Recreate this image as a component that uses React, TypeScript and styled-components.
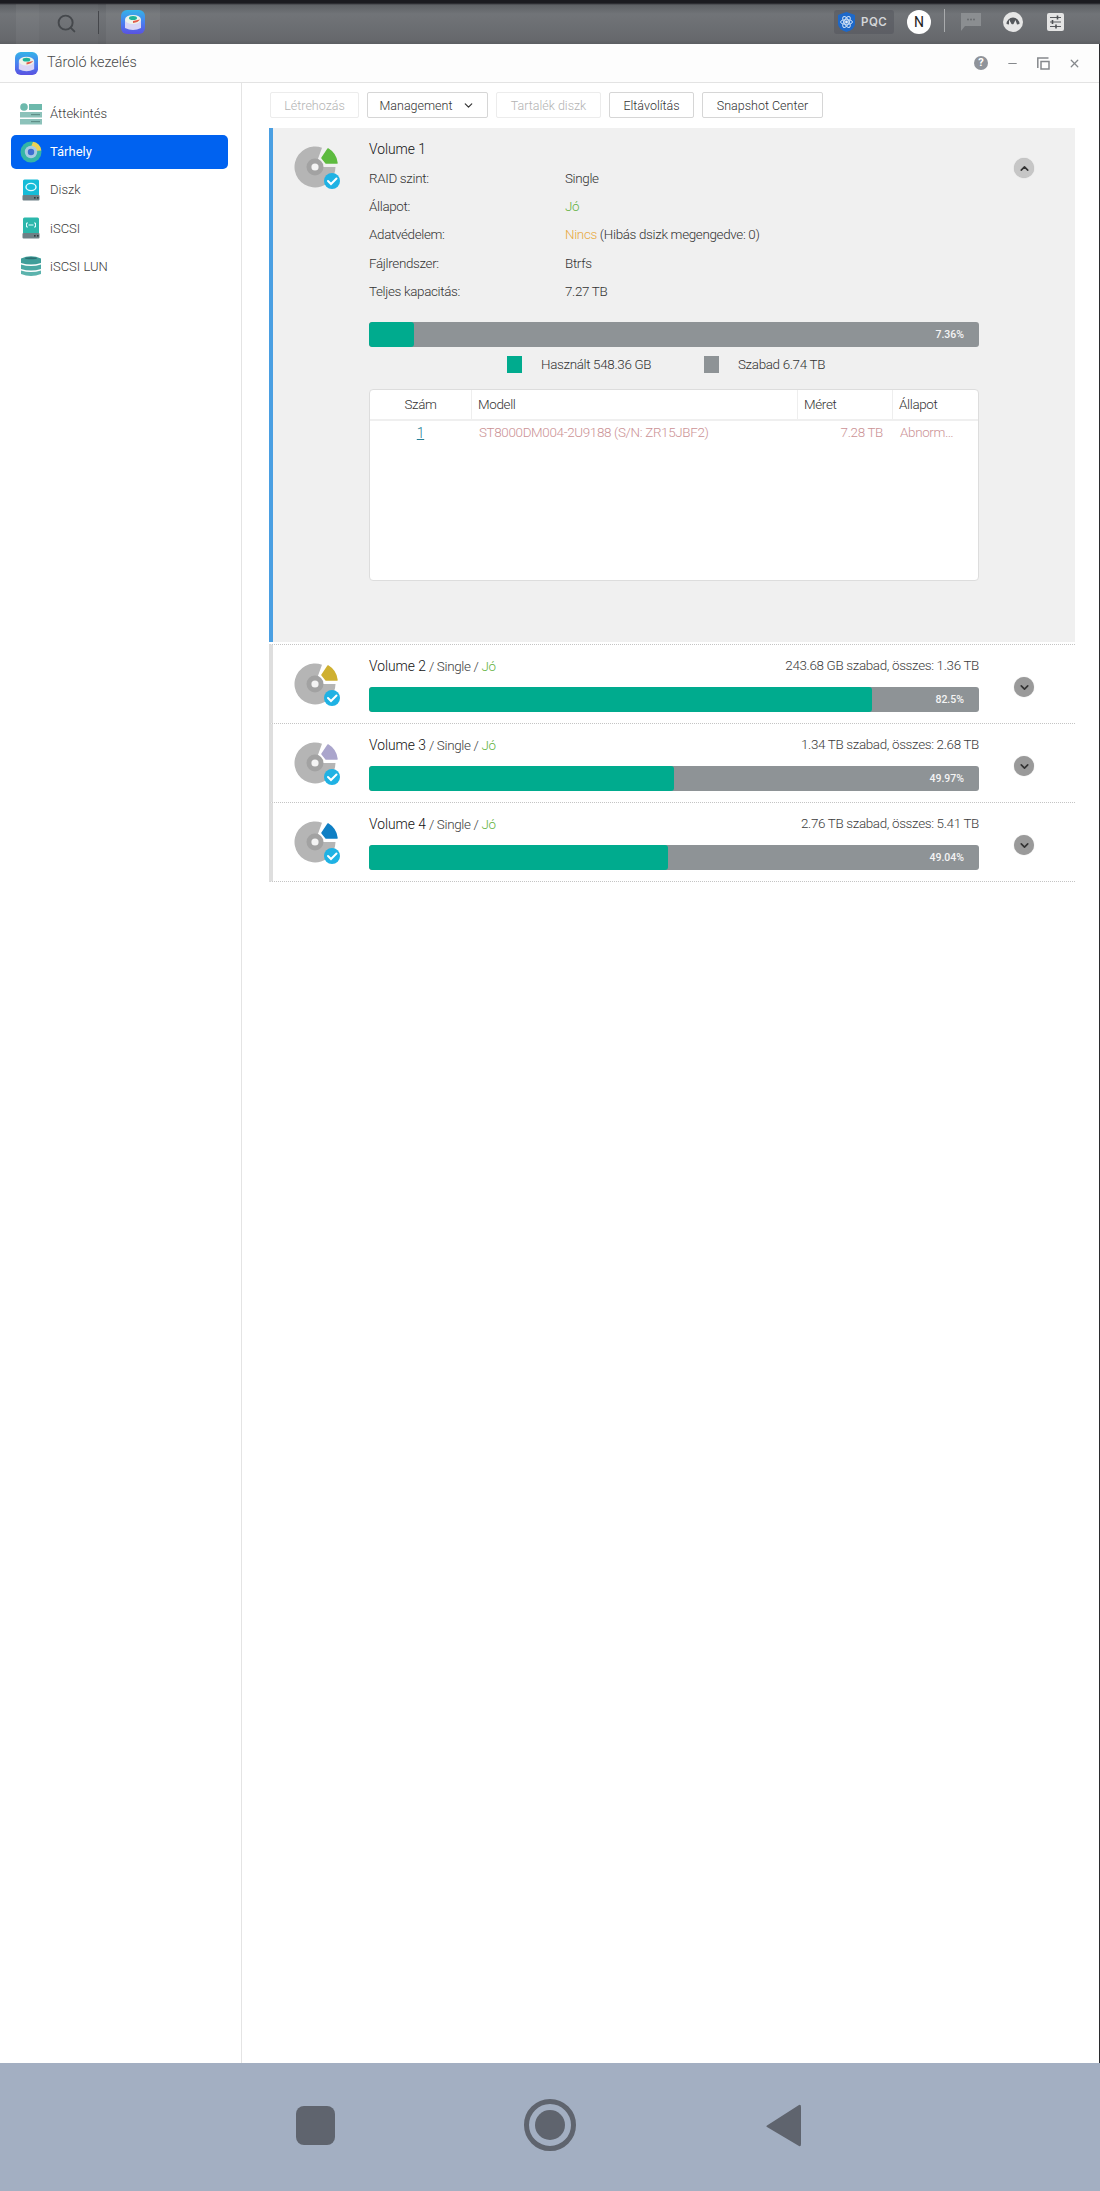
import React from 'react';
import styled, {createGlobalStyle} from 'styled-components';
import {ChevronDown, ChevronUp, Minus, Search, X} from 'lucide-react';

const GlobalStyle = createGlobalStyle`
  html, body {
    margin: 0;
    padding: 0;
    background: #ffffff;
  }
  body {
    font-family: Roboto, "Liberation Sans", sans-serif;
    font-size: 13px;
    font-weight: 300;
    color: #333;
  }
`;

const Page = styled.div`
  width: 1100px;
  height: 2191px;
  display: flex;
  flex-direction: column;
  overflow: hidden;
  background: #2a2b2e;
`;

const TopBar = styled.header`
  height: 44px;
  flex: none;
  box-sizing: border-box;
  display: flex;
  align-items: stretch;
  padding: 4px 0 0 16px;
  background: linear-gradient(#1b1b20 0, #1b1b20 3px, #5d6064 5px, #717478 14px, #66686c 40px, #5c5e62 44px);
`;

const GhostTile = styled.div`
  width: 23px;
  background: rgba(255, 255, 255, 0.05);
`;

const SearchCell = styled.div`
  width: 59px;
  display: flex;
  align-items: center;
  justify-content: center;
  padding: 0 5px 2px 0;
  box-sizing: border-box;
  background: rgba(255, 255, 255, 0.025);
  color: #45484c;
`;

const BarDivider = styled.div<{$light?: boolean}>`
  width: 1px;
  height: 23px;
  flex: none;
  align-self: center;
  margin-top: -4px;
  background: ${p => (p.$light ? '#a9abad' : '#45474b')};
`;

const AppTile = styled.div`
  width: 54px;
  margin-left: 7px;
  display: flex;
  align-items: center;
  justify-content: center;
  box-sizing: border-box;
  padding: 0 0 4px 0;
  background: rgba(255, 255, 255, 0.05);
`;

const TraySpacer = styled.div`
  flex: 1;
`;

const Tray = styled.div`
  display: flex;
  align-items: center;
  height: 40px;
  padding: 0 36px 4px 0;
  box-sizing: border-box;
`;

const PqcTile = styled.div`
  width: 60px;
  height: 24px;
  box-sizing: border-box;
  padding-left: 4px;
  margin-right: 13px;
  display: flex;
  align-items: center;
  gap: 6px;
  border-radius: 3px;
  background: rgba(84, 86, 92, 0.55);
  color: #d4d6d9;
  font-family: Inter, Roboto, sans-serif;
  font-size: 11.5px;
  font-weight: 600;
  letter-spacing: 0.5px;
`;

const Avatar = styled.div`
  width: 24px;
  height: 24px;
  margin-right: 13px;
  border-radius: 50%;
  background: #ffffff;
  color: #222;
  display: flex;
  align-items: center;
  justify-content: center;
  font-size: 14px;
  font-weight: 400;
`;

const TrayIcon = styled.span<{$gap: number}>`
  display: flex;
  margin-left: ${p => p.$gap}px;
`;

const Window = styled.main`
  flex: 1;
  min-height: 0;
  display: flex;
  flex-direction: column;
  margin-right: 1px;
  background: #ffffff;
  border-radius: 6px 3px 0 0;
`;

const TitleBar = styled.div`
  height: 39px;
  flex: none;
  box-sizing: border-box;
  display: flex;
  align-items: center;
  padding: 0 18px 0 15px;
  border-bottom: 1px solid #e3e3e3;
  background: #fdfdfd;
`;

const TitleText = styled.div`
  margin: 0 0 2px 9px;
  flex: 1;
  font-size: 14.4px;
  color: #4a4a4a;
`;

const WindowControls = styled.div`
  display: flex;
  align-items: center;
  gap: 18px;
  color: #85888c;
`;

const HelpDot = styled.div`
  width: 14px;
  height: 14px;
  border-radius: 50%;
  background: #8f939a;
  color: #fff;
  font-size: 11px;
  font-weight: 700;
  line-height: 14px;
  text-align: center;
`;

const Body = styled.div`
  flex: 1;
  min-height: 0;
  display: flex;
`;

const Sidebar = styled.nav`
  width: 242px;
  flex: none;
  box-sizing: border-box;
  padding: 14px 13px 0 11px;
  border-right: 1px solid #e4e4e4;
`;

const NavItem = styled.div<{$active?: boolean}>`
  height: 34px;
  margin-bottom: 4.2px;
  padding: 0 0 1px 9px;
  box-sizing: border-box;
  display: flex;
  align-items: center;
  gap: 8px;
  border-radius: 5px;
  background: ${p => (p.$active ? '#0062f0' : 'transparent')};
  color: ${p => (p.$active ? '#ffffff' : '#3c3c3c')};
  font-size: 13px;
  font-weight: ${p => (p.$active ? 400 : 300)};
`;

const NavIconBox = styled.span`
  width: 22px;
  height: 22px;
  display: flex;
  flex: none;
`;

const Content = styled.section`
  flex: 1;
  min-width: 0;
  padding: 9px 24px 0 27px;
`;

const Toolbar = styled.div`
  display: flex;
  gap: 8px;
  margin-bottom: 10px;
  padding-left: 1px;
`;

const ToolButton = styled.button<{$width: number; $disabled?: boolean}>`
  width: ${p => p.$width}px;
  height: 26px;
  padding: 0;
  display: flex;
  align-items: center;
  justify-content: center;
  gap: 10px;
  background: #ffffff;
  border: 1px solid ${p => (p.$disabled ? '#ececec' : '#d6d6d6')};
  border-radius: 2px;
  color: ${p => (p.$disabled ? '#b3b3b3' : '#333')};
  font-family: inherit;
  font-size: 12.5px;
  font-weight: 300;
`;

const VolumePanel = styled.article`
  height: 514px;
  box-sizing: border-box;
  display: flex;
  padding: 12px 0 0 20px;
  margin-bottom: 2px;
  background: #f0f0f0;
  border-left: 4px solid #4a9fe2;
  font-size: 13.4px;
  letter-spacing: -0.33px;
`;

const VolumeRow = styled.article`
  height: 79px;
  box-sizing: border-box;
  display: flex;
  padding: 12px 0 0 20px;
  border-left: 4px solid #dedede;
  border-bottom: 1px dotted #c4c4c4;
  ${VolumePanel} + & {
    height: 80px;
    border-top: 1px dotted #c4c4c4;
  }
`;

const DiskCol = styled.div`
  width: 76px;
  padding-top: 2px;
  flex: none;
`;

const VolumeBody = styled.div`
  width: 610px;
  flex: none;
`;

const ChevronCol = styled.div<{$top: number}>`
  margin: ${p => p.$top}px 0 0 35px;
`;

const Chevron = styled.div<{$open?: boolean}>`
  width: 20px;
  height: 20px;
  border-radius: 50%;
  display: flex;
  align-items: center;
  justify-content: center;
  background: ${p => (p.$open ? '#c6c6c6' : '#9a9a9a')};
  box-shadow: 0 0 1px rgba(0, 0, 0, 0.3);
  color: #333;
`;

const VolumeTitle = styled.div`
  height: 18px;
  line-height: 18px;
  margin-bottom: 6px;
  font-size: 13.8px;
  letter-spacing: 0;
  color: #111;
`;

const RowHead = styled.div`
  height: 18px;
  line-height: 18px;
  margin-bottom: 12px;
  display: flex;
  justify-content: space-between;
  font-size: 13.4px;
  letter-spacing: -0.33px;
  color: #3c3c3c;
`;

const RowName = styled.span`
  font-size: 13.8px;
  letter-spacing: 0;
  color: #111;
`;

const Good = styled.span`
  color: #5fb13c;
`;

const Warn = styled.span`
  color: #e8a93f;
`;

const InfoGrid = styled.dl`
  margin: 0 0 16px;
  display: grid;
  grid-template-columns: 196px 1fr;
  grid-auto-rows: 28.4px;
  align-items: center;
`;

const InfoKey = styled.dt`
  color: #333;
`;

const InfoValue = styled.dd`
  margin: 0;
  color: #333;
`;

const BarTrack = styled.div`
  position: relative;
  height: 25px;
  border-radius: 3px;
  overflow: hidden;
  display: flex;
  justify-content: flex-end;
  align-items: center;
  padding-right: 15px;
  background: #8e9396;
  color: #f4f4f4;
  font-size: 10.5px;
  font-weight: 500;
  letter-spacing: 0;
`;

const BarFill = styled.div`
  position: absolute;
  left: 0;
  top: 0;
  bottom: 0;
  background: #00ab8e;
  border-radius: 3px;
`;

const BarLabel = styled.span`
  position: relative;
`;

const Legend = styled.div`
  height: 17px;
  margin: 9px 0 16px 138px;
  display: flex;
  align-items: center;
`;

const LegendSwatch = styled.span<{$color: string}>`
  width: 15px;
  height: 17px;
  background: ${p => p.$color};
`;

const LegendLabel = styled.span<{$width: number}>`
  width: ${p => p.$width}px;
  margin-left: 19px;
`;

const DiskTable = styled.div`
  height: 192px;
  box-sizing: border-box;
  background: #ffffff;
  border: 1px solid #dddddd;
  border-radius: 4px;
`;

const TableRow = styled.div<{$head?: boolean}>`
  display: grid;
  grid-template-columns: 101px 326px 95px 1fr;
  height: ${p => (p.$head ? 29 : 24)}px;
  align-items: center;
  border-bottom: ${p => (p.$head ? '2px solid #efefef' : 'none')};
`;

const HeadCell = styled.div<{$center?: boolean}>`
  height: 100%;
  line-height: 29px;
  padding-left: ${p => (p.$center ? 0 : 6)}px;
  box-sizing: border-box;
  text-align: ${p => (p.$center ? 'center' : 'left')};
  border-left: 1px solid #eeeeee;
  color: #333;
  &:first-child {
    border-left: 0;
  }
`;

const DiskLink = styled.a`
  text-align: center;
  color: #2a7f96;
  font-size: 14px;
  text-decoration: underline;
`;

const BadCell = styled.div<{$right?: boolean}>`
  padding: ${p => (p.$right ? '0 9px 0 0' : '0 20px 0 8px')};
  text-align: ${p => (p.$right ? 'right' : 'left')};
  color: #cb9295;
  white-space: nowrap;
  overflow: hidden;
  text-overflow: ellipsis;
`;

const NavBar = styled.footer`
  height: 128px;
  flex: none;
  display: flex;
  align-items: center;
  padding-left: 296px;
  box-sizing: border-box;
  background: #a3afc2;
`;

const StopButton = styled.div`
  width: 39px;
  height: 39px;
  margin: -4px 0 0 0;
  border-radius: 8px;
  background: #5f646e;
`;

const HomeButton = styled.div`
  width: 52px;
  height: 52px;
  margin: -4px 0 0 189px;
  box-sizing: border-box;
  border: 5px solid #5f646e;
  border-radius: 50%;
  display: flex;
  align-items: center;
  justify-content: center;
  &::after {
    content: '';
    width: 30px;
    height: 30px;
    border-radius: 50%;
    background: #5f646e;
  }
`;

const BackButton = styled.svg`
  margin: -3px 0 0 189px;
`;

function AppIcon({size}: {size: number}) {
  return (
    <svg width={size} height={size} viewBox="0 0 24 24">
      <defs>
        <linearGradient id="appbg" x1="0" y1="0" x2="0" y2="1">
          <stop offset="0" stopColor="#35b3e8" />
          <stop offset="0.55" stopColor="#4a7cf0" />
          <stop offset="1" stopColor="#5a52e0" />
        </linearGradient>
      </defs>
      <rect width="24" height="24" rx="6" fill="url(#appbg)" />
      <path d="M4 10 V18 Q12 22 20 18 V10 Z" fill="#d9d6f6" />
      <ellipse cx="12" cy="9.5" rx="8" ry="4.5" fill="#eef3ea" />
      <ellipse cx="12" cy="8" rx="4" ry="2" fill="#1fb39a" />
      <path d="M12 11 L19 9.5 Q17 12.5 12 13 Z" fill="#e25a4a" />
    </svg>
  );
}

function OverviewIcon() {
  return (
    <svg width="22" height="22" viewBox="0 0 22 22">
      <circle cx="4" cy="4" r="3.8" fill="#6db9ac" />
      <rect x="9" y="1" width="13" height="6" fill="#6db9ac" />
      <rect y="9" width="22" height="5.5" fill="#8cc2ba" />
      <rect y="16" width="22" height="5.5" fill="#8cc2ba" />
      <rect x="11" y="11" width="9" height="1.2" fill="#5f8f88" />
      <rect x="11" y="18" width="9" height="1.2" fill="#5f8f88" />
    </svg>
  );
}

function StorageIcon() {
  return (
    <svg width="22" height="22" viewBox="0 0 22 22">
      <circle cx="11" cy="11" r="10.5" fill="#35b5a6" />
      <path d="M13 0.7 A10.5 10.5 0 0 1 21.4 9.5 L15 10 Q14 6.5 11 6 Z" fill="#ecd257" />
      <circle cx="11" cy="11" r="6.2" fill="#a7cbe2" />
      <circle cx="11" cy="11" r="3.2" fill="#3d6fd0" />
    </svg>
  );
}

function DriveIcon({color, glyph}: {color: string; glyph: 'disk' | 'link'}) {
  return (
    <svg width="22" height="22" viewBox="0 0 22 22">
      <path d="M3 2 Q3 0.5 4.5 0.5 H17.5 Q19 0.5 19 2 V16 H3 Z" fill={color} />
      <rect x="2.5" y="16" width="17" height="5.5" rx="1" fill="#6d7f85" />
      <rect x="14" y="18" width="1.6" height="1.6" fill="#2e3a3e" />
      <rect x="17" y="18" width="1.6" height="1.6" fill="#2e3a3e" />
      {glyph === 'disk' ? (
        <ellipse cx="11" cy="8" rx="5" ry="3.6" fill="none" stroke="#e6fbff" strokeWidth="1.4" />
      ) : (
        <path d="M8 6 H6.5 V10 H8 M14 6 H15.5 V10 H14 M8.5 8 H13.5" fill="none" stroke="#e6fbff" strokeWidth="1" />
      )}
    </svg>
  );
}

function LunIcon() {
  return (
    <svg width="22" height="22" viewBox="0 0 22 22">
      <path d="M1 3.5 Q11 -1 21 3.5 V8 Q11 11 1 8 Z" fill="#3f9e9a" />
      <path d="M1 9.5 Q11 12.5 21 9.5 V14 Q11 17 1 14 Z" fill="#4aa9a4" />
      <path d="M1 15.5 Q11 18.5 21 15.5 V19 Q11 23 1 19 Z" fill="#5bb3ad" />
      <ellipse cx="11" cy="3.2" rx="6" ry="1" fill="#2c6f72" />
    </svg>
  );
}

function DiskIcon({wedge}: {wedge: string}) {
  return (
    <svg width="50" height="50" viewBox="0 0 50 50">
      <path d="M22 25 L29 5.7 A20.5 20.5 0 1 0 42.5 25 Z" fill="#b5b5b5" />
      <circle cx="22" cy="25" r="8.5" fill="#a2a2a2" />
      <circle cx="22" cy="25" r="3.6" fill="#f4f4f4" />
      <path
        d="M35 7 A19 19 0 0 1 44 21 H33 L29 16 Z"
        fill={wedge}
        stroke={wedge}
        strokeWidth="1.5"
        strokeLinejoin="round"
      />
      <circle cx="39" cy="39" r="8" fill="#1fb2e4" />
      <path d="M35 39 L38 42 L43.5 36.5" fill="none" stroke="#ffffff" strokeWidth="2" strokeLinecap="round" />
    </svg>
  );
}

function UsageBar({percent}: {percent: number}) {
  return (
    <BarTrack>
      <BarFill style={{width: `${percent}%`}} />
      <BarLabel>{percent}%</BarLabel>
    </BarTrack>
  );
}

const navItems = [
  {label: 'Áttekintés', icon: <OverviewIcon />},
  {label: 'Tárhely', icon: <StorageIcon />, active: true},
  {label: 'Diszk', icon: <DriveIcon color="#16bcd8" glyph="disk" />},
  {label: 'iSCSI', icon: <DriveIcon color="#2cb7ab" glyph="link" />},
  {label: 'iSCSI LUN', icon: <LunIcon />},
];

const volumes = [
  {name: 'Volume 2', free: '243.68 GB szabad, összes: 1.36 TB', percent: 82.5, wedge: '#cfb030'},
  {name: 'Volume 3', free: '1.34 TB szabad, összes: 2.68 TB', percent: 49.97, wedge: '#aaa5cc'},
  {name: 'Volume 4', free: '2.76 TB szabad, összes: 5.41 TB', percent: 49.04, wedge: '#0f7fc4'},
];

export default function App() {
  return (
    <Page>
      <GlobalStyle />
      <TopBar>
        <GhostTile />
        <SearchCell>
          <Search size={21} strokeWidth={2.2} />
        </SearchCell>
        <BarDivider />
        <AppTile>
          <AppIcon size={24} />
        </AppTile>
        <TraySpacer />
        <Tray>
          <PqcTile>
            <svg width="17" height="20" viewBox="0 0 17 20">
              <path d="M0 3 L8.5 0 L17 3 V12 Q17 17 8.5 20 Q0 17 0 12 Z" fill="#1d68c9" />
              <g fill="none" stroke="#c9def6" strokeWidth="1">
                <ellipse cx="8.5" cy="10" rx="6" ry="2.4" />
                <ellipse cx="8.5" cy="10" rx="6" ry="2.4" transform="rotate(60 8.5 10)" />
                <ellipse cx="8.5" cy="10" rx="6" ry="2.4" transform="rotate(120 8.5 10)" />
              </g>
              <circle cx="8.5" cy="10" r="1.4" fill="#e3eefb" />
            </svg>
            PQC
          </PqcTile>
          <Avatar>N</Avatar>
          <BarDivider $light />
          <TrayIcon $gap={16}>
            <svg width="20" height="18" viewBox="0 0 20 18">
              <path d="M0 0 H20 V13 H4 L0 18 Z" fill="#8b8e91" />
              <circle cx="7" cy="6.5" r="0.9" fill="#66696d" />
              <circle cx="10" cy="6.5" r="0.9" fill="#66696d" />
              <circle cx="13" cy="6.5" r="0.9" fill="#66696d" />
            </svg>
          </TrayIcon>
          <TrayIcon $gap={22}>
            <svg width="20" height="20" viewBox="0 0 20 20">
              <circle cx="10" cy="10" r="10" fill="#e6e6e6" />
              <path
                d="M3.5 12 A6.5 6.5 0 0 1 16.5 12 L14 12.5 L12.5 8 L10.5 12 A1.6 1.6 0 0 1 8 11 L6 7.5 L6 12.5 Z"
                fill="#55585c"
              />
            </svg>
          </TrayIcon>
          <TrayIcon $gap={24}>
            <svg width="17" height="18" viewBox="0 0 17 18">
              <rect width="17" height="18" rx="2" fill="#e4e4e4" />
              <path d="M3 4.5 H14 M3 9 H14 M3 13.5 H14" stroke="#5a5c60" strokeWidth="1" />
              <path d="M10.5 2.5 V6.5 M5.5 7 V11 M9 11.5 V15.5" stroke="#4e5054" strokeWidth="1.6" />
            </svg>
          </TrayIcon>
        </Tray>
      </TopBar>
      <Window>
        <TitleBar>
          <AppIcon size={23} />
          <TitleText>Tároló kezelés</TitleText>
          <WindowControls>
            <HelpDot>?</HelpDot>
            <Minus size={13} strokeWidth={2} />
            <svg width="13" height="13" viewBox="0 0 13 13" fill="none" stroke="currentColor" strokeWidth="1.5">
              <path d="M0.8 11 V1 H11.5" />
              <rect x="4" y="4.5" width="8" height="7.5" />
            </svg>
            <X size={13} strokeWidth={2.4} />
          </WindowControls>
        </TitleBar>
        <Body>
          <Sidebar>
            {navItems.map(item => (
              <NavItem key={item.label} $active={item.active}>
                <NavIconBox>{item.icon}</NavIconBox>
                {item.label}
              </NavItem>
            ))}
          </Sidebar>
          <Content>
            <Toolbar>
              <ToolButton $width={89} $disabled>Létrehozás</ToolButton>
              <ToolButton $width={121}>
                Management
                <ChevronDown size={13} strokeWidth={2.2} />
              </ToolButton>
              <ToolButton $width={105} $disabled>Tartalék diszk</ToolButton>
              <ToolButton $width={85}>Eltávolítás</ToolButton>
              <ToolButton $width={121}>Snapshot Center</ToolButton>
            </Toolbar>
            <VolumePanel>
              <DiskCol>
                <DiskIcon wedge="#5dbb3f" />
              </DiskCol>
              <VolumeBody>
                <VolumeTitle>Volume 1</VolumeTitle>
                <InfoGrid>
                  <InfoKey>RAID szint:</InfoKey>
                  <InfoValue>Single</InfoValue>
                  <InfoKey>Állapot:</InfoKey>
                  <InfoValue><Good>Jó</Good></InfoValue>
                  <InfoKey>Adatvédelem:</InfoKey>
                  <InfoValue><Warn>Nincs</Warn> (Hibás dsizk megengedve: 0)</InfoValue>
                  <InfoKey>Fájlrendszer:</InfoKey>
                  <InfoValue>Btrfs</InfoValue>
                  <InfoKey>Teljes kapacitás:</InfoKey>
                  <InfoValue>7.27 TB</InfoValue>
                </InfoGrid>
                <UsageBar percent={7.36} />
                <Legend>
                  <LegendSwatch $color="#00ab8e" />
                  <LegendLabel $width={163}>Használt 548.36 GB</LegendLabel>
                  <LegendSwatch $color="#8e9396" />
                  <LegendLabel $width={100}>Szabad 6.74 TB</LegendLabel>
                </Legend>
                <DiskTable>
                  <TableRow $head>
                    <HeadCell $center>Szám</HeadCell>
                    <HeadCell>Modell</HeadCell>
                    <HeadCell>Méret</HeadCell>
                    <HeadCell>Állapot</HeadCell>
                  </TableRow>
                  <TableRow>
                    <DiskLink>1</DiskLink>
                    <BadCell>ST8000DM004-2U9188 (S/N: ZR15JBF2)</BadCell>
                    <BadCell $right>7.28 TB</BadCell>
                    <BadCell>Abnormális</BadCell>
                  </TableRow>
                </DiskTable>
              </VolumeBody>
              <ChevronCol $top={18}>
                <Chevron $open>
                  <ChevronUp size={13} strokeWidth={3} />
                </Chevron>
              </ChevronCol>
            </VolumePanel>
            {volumes.map(v => (
              <VolumeRow key={v.name}>
                <DiskCol>
                  <DiskIcon wedge={v.wedge} />
                </DiskCol>
                <VolumeBody>
                  <RowHead>
                    <span>
                      <RowName>{v.name}</RowName> / Single / <Good>Jó</Good>
                    </span>
                    <span>{v.free}</span>
                  </RowHead>
                  <UsageBar percent={v.percent} />
                </VolumeBody>
                <ChevronCol $top={20}>
                  <Chevron>
                    <ChevronDown size={13} strokeWidth={3} />
                  </Chevron>
                </ChevronCol>
              </VolumeRow>
            ))}
          </Content>
        </Body>
      </Window>
      <NavBar>
        <StopButton />
        <HomeButton />
        <BackButton width="37" height="45" viewBox="0 0 37 45">
          <path d="M2 22.5 L34 2 Q36 1 36 4 V41 Q36 44 34 43 L2 24 Q0.5 23 2 22.5 Z" fill="#5f646e" />
        </BackButton>
      </NavBar>
    </Page>
  );
}
